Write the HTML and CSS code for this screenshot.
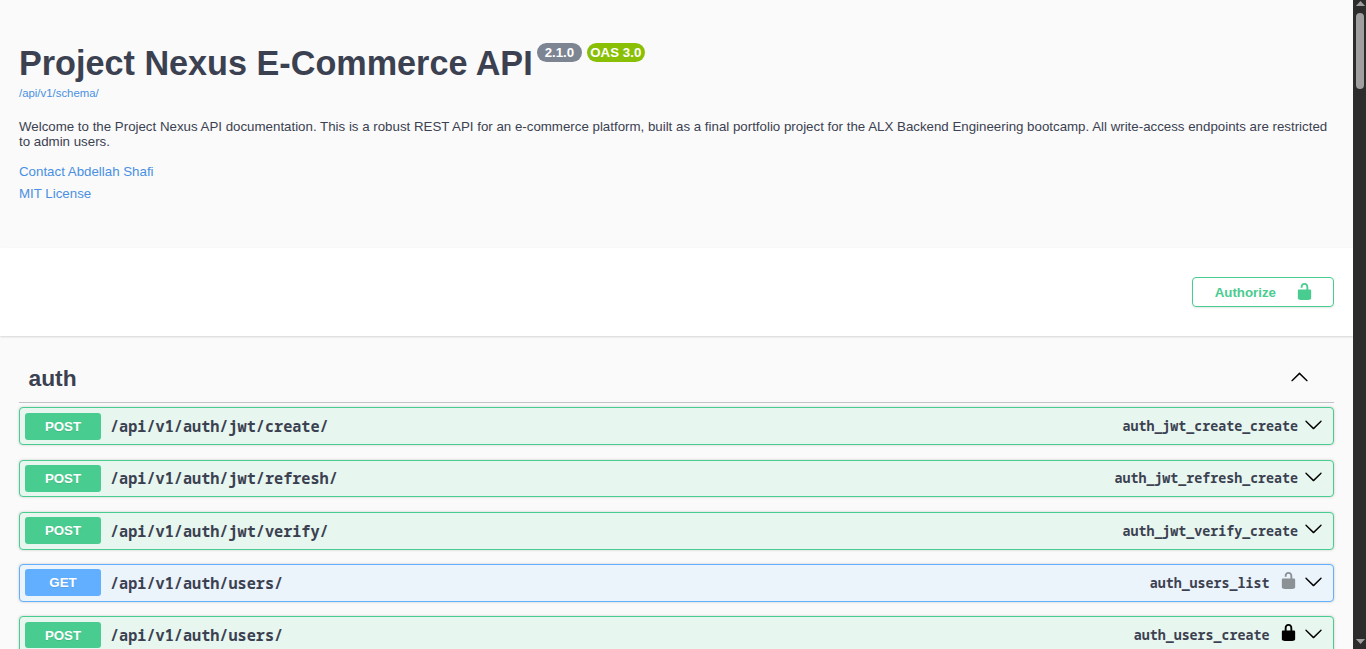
FILE: index.html
```html
<!DOCTYPE html>
<html lang="en">
<head>
<meta charset="utf-8">
<title>Project Nexus E-Commerce API</title>
<link rel="stylesheet" href="styles.css">
</head>
<body>
<svg class="defs" aria-hidden="true">
  <symbol id="down" viewBox="0 0 20 20"><path d="M17.418 6.109c.272-.268.709-.268.979 0s.271.701 0 .969l-7.908 7.83c-.27.268-.707.268-.979 0l-7.908-7.83c-.27-.268-.27-.701 0-.969.271-.268.709-.268.979 0L10 13.25l7.418-7.141z"/></symbol>
  <symbol id="up" viewBox="0 0 20 20"><path d="M17.418 14.908c.272.268.709.268.979 0s.271-.701 0-.969l-7.908-7.83c-.27-.268-.707-.268-.979 0l-7.908 7.83c-.27.268-.27.701 0 .969.271.268.709.268.979 0L10 7.767l7.418 7.141z"/></symbol>
  <symbol id="locked" viewBox="0 0 20 20"><path d="M15.8 8H14V5.6C14 2.703 12.665 1 10 1 7.334 1 6 2.703 6 5.6V8H4c-.553 0-1 .646-1 1.199V17c0 .549.428 1.139.951 1.307l1.197.387C5.672 18.861 6.55 19 7.1 19h5.8c.549 0 1.428-.139 1.951-.307l1.196-.387c.524-.167.953-.757.953-1.306V9.199C17 8.646 16.352 8 15.8 8zM12 8H8V5.199C8 3.754 8.797 3 10 3c1.203 0 2 .754 2 2.199V8z"/></symbol>
  <symbol id="unlocked" viewBox="0 0 20 20"><path d="M15.8 8H14V5.6C14 2.703 12.665 1 10 1 7.334 1 6 2.703 6 5.6V6h2v-.801C8 3.754 8.797 3 10 3c1.203 0 2 .754 2 2.199V8H4c-.553 0-1 .646-1 1.199V17c0 .549.428 1.139.951 1.307l1.197.387C5.672 18.861 6.55 19 7.1 19h5.8c.549 0 1.428-.139 1.951-.307l1.196-.387c.524-.167.953-.757.953-1.306V9.199C17 8.646 16.352 8 15.8 8z"/></symbol>
</svg>
<div class="window">
  <div class="page">
    <header class="info">
      <h1 class="title">Project Nexus E-Commerce API<span class="badges"><span class="badge">2.1.0</span><span class="badge oas">OAS 3.0</span></span></h1>
      <a class="schema">/api/v1/schema/</a>
      <p class="description">Welcome to the Project Nexus API documentation. This is a robust REST API for an e-commerce platform, built as a final portfolio project for the ALX Backend Engineering bootcamp. All write-access endpoints are restricted to admin users.</p>
      <a class="link">Contact Abdellah Shafi</a>
      <a class="link">MIT License</a>
    </header>
    <section class="schemes">
      <button class="authorize"><span>Authorize</span><svg class="auth-icon"><use href="#unlocked"/></svg></button>
    </section>
    <main class="operations">
      <h2 class="tag"><span>auth</span><svg class="tag-arrow"><use href="#up"/></svg></h2>
      <div class="list">
        <div class="op post"><span class="method">POST</span><span class="path">/api/v1/auth/jwt/create/</span><span class="opid">auth_jwt_create_create</span><svg class="arrow"><use href="#down"/></svg></div>
        <div class="op post"><span class="method">POST</span><span class="path">/api/v1/auth/jwt/refresh/</span><span class="opid">auth_jwt_refresh_create</span><svg class="arrow"><use href="#down"/></svg></div>
        <div class="op post"><span class="method">POST</span><span class="path">/api/v1/auth/jwt/verify/</span><span class="opid">auth_jwt_verify_create</span><svg class="arrow"><use href="#down"/></svg></div>
        <div class="op get"><span class="method">GET</span><span class="path">/api/v1/auth/users/</span><span class="opid">auth_users_list</span><svg class="lock faded"><use href="#unlocked"/></svg><svg class="arrow"><use href="#down"/></svg></div>
        <div class="op post"><span class="method">POST</span><span class="path">/api/v1/auth/users/</span><span class="opid">auth_users_create</span><svg class="lock"><use href="#locked"/></svg><svg class="arrow"><use href="#down"/></svg></div>
      </div>
    </main>
  </div>
  <div class="scrollbar">
    <svg class="scroll-arrow" viewBox="0 0 11 6"><path d="M0 6L5.5 0 11 6z"/></svg>
    <div class="thumb"></div>
    <svg class="scroll-arrow end" viewBox="0 0 11 6"><path d="M0 0L5.5 6 11 0z"/></svg>
  </div>
</div>
</body>
</html>
```
FILE: styles.css
```css
* { box-sizing: border-box; }
body {
  margin: 0;
  overflow: hidden;
  background: #fafafa;
  color: #3b4151;
  font-family: "Liberation Sans", Arial, sans-serif;
}
.defs { display: none; }
.window { display: flex; height: 649px; overflow: hidden; }
.page { flex: 1; min-width: 0; }

.info { height: 248px; padding: 43px 19px 0; }
.title { display: flex; margin: 0; font-size: 34.2px; line-height: 40px; font-weight: 700; white-space: nowrap; }
.badges { display: flex; gap: 4.8px; margin-left: 4.3px; }
.badge {
  height: 19px;
  padding: 0 7.7px;
  border-radius: 10px;
  background: #7d8492;
  color: #fff;
  font-size: 13.3px;
  line-height: 19px;
}
.oas { padding: 0 3.6px; background: #89bf04; }
.schema { display: block; margin-top: 3px; color: #4990e2; font-size: 11.4px; line-height: 14px; }
.description { margin: 19px 0 0; font-size: 13.3px; line-height: 15px; }
.link { display: block; color: #4990e2; font-size: 13.3px; line-height: 22px; }
.description + .link { margin-top: 12px; }

.schemes {
  display: flex;
  justify-content: flex-end;
  height: 88px;
  padding: 29px 19px 0;
  background: #fff;
  box-shadow: 0 1px 2px rgba(0, 0, 0, .15);
}
.authorize {
  display: flex;
  align-items: center;
  justify-content: space-between;
  width: 142px;
  height: 30px;
  padding: 0 19px 0 21.7px;
  border: 1px solid #49cc90;
  border-radius: 4px;
  background: transparent;
  box-shadow: 0 1px 2px rgba(0, 0, 0, .1);
  color: #49cc90;
  font: 700 13.3px "Liberation Sans", Arial, sans-serif;
}
.auth-icon { width: 19px; height: 19px; margin-bottom: 2px; fill: #49cc90; }

.operations { padding: 19px 19px 0; }
.tag {
  display: flex;
  align-items: center;
  justify-content: space-between;
  height: 48px;
  margin: 0;
  padding: 0 25px 0 9.5px;
  border-bottom: 1px solid rgba(59, 65, 81, .3);
  font-size: 22.8px;
}
.tag-arrow { width: 19px; height: 19px; margin-bottom: 4.5px; }
.list { display: flex; flex-direction: column; gap: 14.25px; padding-top: 4.4px; }
.op {
  display: flex;
  flex-shrink: 0;
  align-items: center;
  height: 37.9px;
  padding: 0 10px 0 5px;
  border: 1px solid;
  border-radius: 4px;
  box-shadow: 0 0 3px rgba(0, 0, 0, .19);
}
.post { border-color: #49cc90; background: #e7f6ee; }
.get { border-color: #61affe; background: #ebf3fb; }
.method {
  width: 76px;
  height: 26.6px;
  border-radius: 3px;
  color: #fff;
  font-size: 13.3px;
  font-weight: 700;
  line-height: 27.4px;
  text-align: center;
  text-shadow: 0 1px 0 rgba(0, 0, 0, .1);
}
.post .method { background: #49cc90; }
.get .method { background: #61affe; }
.path, .opid { font-family: "Noto Sans Mono", "Noto Mono", monospace; font-weight: 700; white-space: nowrap; }
.path { margin-left: 9px; font-size: 15.2px; }
.opid { margin-left: auto; font-size: 13.3px; }
.lock { width: 19px; height: 19px; margin: 0 .3px 5px 9.3px; }
.faded { opacity: .4; }
.arrow { width: 19px; height: 19px; margin: 0 0 3.4px 6px; }

.scrollbar { display: flex; flex-direction: column; align-items: center; width: 13px; padding: 1px 0 5px; background: #2c2c2c; }
.scroll-arrow { flex-shrink: 0; width: 11px; height: 5px; margin-left: 1px; fill: #9f9f9f; }
.thumb { width: 8px; height: 76px; margin: 7px 0 0 1px; border-radius: 4px; background: #9f9f9f; }
.end { margin-top: auto; }
```
